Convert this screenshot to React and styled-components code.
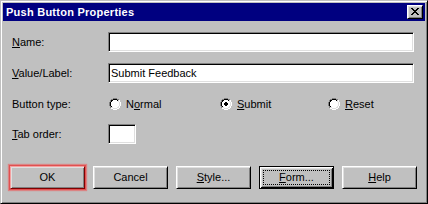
import React from "react";
import styled, { createGlobalStyle } from "styled-components";

const Global = createGlobalStyle`
  html, body { margin: 0; padding: 0; background: #c0c0c0; }
  body { font-family: "Liberation Sans", Arial, sans-serif; font-size: 11px; color: #000; }
  * { box-sizing: border-box; }
`;

const Window = styled.div`
  width: 428px;
  height: 204px;
  background: #c0c0c0;
  border: 1px solid;
  border-color: #c0c0c0 #000 #000 #c0c0c0;
  box-shadow: inset 1px 1px #fff, inset -1px -1px #808080;
  padding: 2px;
  display: flex;
  flex-direction: column;
`;

const TitleBar = styled.div`
  height: 18px;
  background: #000080;
  display: flex;
  align-items: center;
  justify-content: space-between;
  padding: 0 2px 0 3px;
`;

const Title = styled.span`
  color: #fff;
  font-weight: bold;
  font-size: 11px;
  letter-spacing: 0.25px;
`;

const CloseButton = styled.div`
  width: 16px;
  height: 14px;
  background: #c0c0c0;
  border: 1px solid;
  border-color: #fff #000 #000 #fff;
  box-shadow: inset 1px 1px #dfdfdf, inset -1px -1px #808080;
  display: flex;
  align-items: center;
  justify-content: center;
  padding: 0 0 1px 0;
`;

const Body = styled.div`
  flex: 1;
  display: flex;
  flex-direction: column;
  padding: 11px 8px 0 7px;
`;

const FormGrid = styled.div`
  display: grid;
  grid-template-columns: 96px 1fr;
  grid-template-rows: 20px 20px 19px 20px;
  row-gap: 11px;
  padding-left: 2px;
  align-items: center;
`;

const Label = styled.label`
  font-size: 11px;
  white-space: nowrap;
`;

const Key = styled.span`
  text-decoration: underline;
  text-underline-offset: 1px;
`;

const Field = styled.input`
  width: ${(p) => p.$w}px;
  height: 20px;
  margin: 0;
  padding: 0 2px 1px 2px;
  background: #fff;
  border: 1px solid;
  border-color: #808080 #fff #fff #808080;
  box-shadow: inset 1px 1px #000, inset -1px -1px #dfdfdf;
  font-family: "Liberation Sans", Arial, sans-serif;
  font-size: 11px;
  color: #000;
  outline: none;
`;

const RadioRow = styled.div`
  display: grid;
  grid-template-columns: 111px 108px auto;
  padding-left: 1px;
  align-items: center;
`;

const RadioItem = styled.div`
  display: flex;
  align-items: center;
  gap: 5px;
`;

const ButtonRow = styled.div`
  display: flex;
  gap: 8px;
  margin-top: 22px;
`;

const Button = styled.div`
  width: 75px;
  height: 23px;
  background: #c0c0c0;
  border: 1px solid;
  border-color: ${(p) => (p.$default ? "#000" : "#fff #000 #000 #fff")};
  box-shadow: ${(p) =>
    p.$default
      ? "inset 1px 1px #fff, inset -1px -1px #000, inset 2px 2px #dfdfdf, inset -2px -2px #808080"
      : p.$highlight
      ? "inset 1px 1px #dfdfdf, inset -1px -1px #808080, 0 0 0 1px #e05050, 0 0 1px 2px rgba(240,80,80,0.55)"
      : "inset 1px 1px #dfdfdf, inset -1px -1px #808080"};
  ${(p) => (p.$highlight ? "border-color: #f4a0a0 #800000 #800000 #f4a0a0;" : "")}
  display: flex;
  align-items: center;
  justify-content: center;
  position: relative;
  font-size: 11px;
  padding-bottom: 1px;
`;

const FocusRect = styled.div`
  position: absolute;
  left: 3px;
  top: 3px;
  right: 3px;
  bottom: 3px;
  border: 1px dotted #000;
  pointer-events: none;
`;

const RADIO = (() => {
  const cells = [];
  for (let y = 0; y < 12; y++) {
    for (let x = 0; x < 12; x++) {
      const dx = x + 0.5 - 6;
      const dy = y + 0.5 - 6;
      const r = Math.sqrt(dx * dx + dy * dy);
      const dark = x + y <= 10;
      let c = null;
      if (r >= 5 && r < 6) c = dark ? "#808080" : "#fff";
      else if (r >= 4 && r < 5) c = dark ? "#000" : "#dfdfdf";
      else if (r < 4) c = "#fff";
      if (c) cells.push({ x, y, c, dot: r < 2 });
    }
  }
  return cells;
})();

function Radio({ checked }) {
  return (
    <svg width="12" height="12" viewBox="0 0 12 12" shapeRendering="crispEdges">
      {RADIO.map((p) => (
        <rect
          key={p.x + "-" + p.y}
          x={p.x}
          y={p.y}
          width="1"
          height="1"
          fill={checked && p.dot ? "#000" : p.c}
        />
      ))}
    </svg>
  );
}

const X_PATTERN = [
  "XX....XX",
  ".XX..XX.",
  "..XXXX..",
  "...XX...",
  "..XXXX..",
  ".XX..XX.",
  "XX....XX",
];

function CloseGlyph() {
  const rects = [];
  X_PATTERN.forEach((row, y) =>
    row.split("").forEach((ch, x) => {
      if (ch === "X") rects.push(<rect key={x + "-" + y} x={x} y={y} width="1" height="1" fill="#000" />);
    })
  );
  return (
    <svg width="8" height="7" viewBox="0 0 8 7" shapeRendering="crispEdges">
      {rects}
    </svg>
  );
}

export default function App() {
  return (
    <>
      <Global />
      <Window>
        <TitleBar>
          <Title>Push Button Properties</Title>
          <CloseButton>
            <CloseGlyph />
          </CloseButton>
        </TitleBar>
        <Body>
          <FormGrid>
            <Label>
              <Key>N</Key>ame:
            </Label>
            <Field $w={306} defaultValue="" />
            <Label>
              <Key>V</Key>alue/Label:
            </Label>
            <Field $w={306} defaultValue="Submit Feedback" />
            <Label>Button type:</Label>
            <RadioRow>
              <RadioItem>
                <Radio />
                <span>
                  N<Key>o</Key>rmal
                </span>
              </RadioItem>
              <RadioItem>
                <Radio checked />
                <span>
                  <Key>S</Key>ubmit
                </span>
              </RadioItem>
              <RadioItem>
                <Radio />
                <span>
                  <Key>R</Key>eset
                </span>
              </RadioItem>
            </RadioRow>
            <Label>
              <Key>T</Key>ab order:
            </Label>
            <Field $w={28} defaultValue="" />
          </FormGrid>
          <ButtonRow>
            <Button $highlight>OK</Button>
            <Button>Cancel</Button>
            <Button>
              <span>
                <Key>S</Key>tyle...
              </span>
            </Button>
            <Button $default>
              <FocusRect />
              <span>
                <Key>F</Key>orm...
              </span>
            </Button>
            <Button>
              <span>
                <Key>H</Key>elp
              </span>
            </Button>
          </ButtonRow>
        </Body>
      </Window>
    </>
  );
}
